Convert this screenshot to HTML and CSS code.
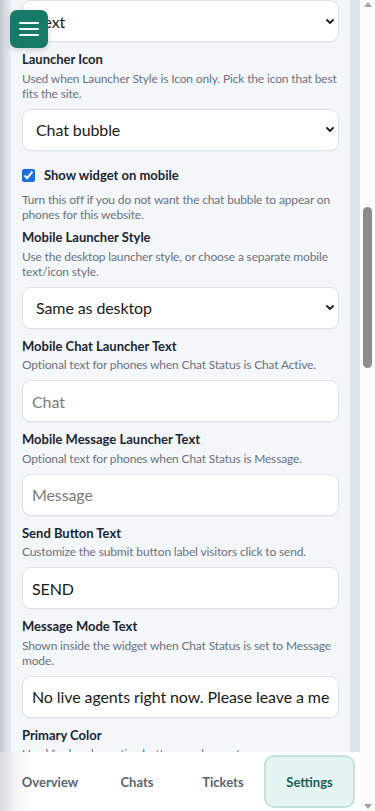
FILE: index.html
```html
<!DOCTYPE html>
<html lang="en">
<head>
<meta charset="utf-8">
<meta name="viewport" content="width=device-width, initial-scale=1">
<title>Widget Settings</title>
<link rel="stylesheet" href="styles.css">
</head>
<body>
<div class="screen">
  <div class="app">
    <div class="content-row">
      <div class="edge-shadow"></div>
      <main class="panel">
        <div class="fields">
          <div class="field field--bare">
            <div class="select-wrap">
              <select class="control select"><option>Text</option></select>
              <svg class="chev" width="8" height="5" viewBox="0 0 8 5"><path d="M1 1 L4 4 L7 1" fill="none" stroke="#1f1f1f" stroke-width="1.8" stroke-linecap="round" stroke-linejoin="round"/></svg>
            </div>
          </div>

          <div class="field">
            <label class="label">Launcher Icon</label>
            <p class="help">Used when Launcher Style is Icon only. Pick the icon that best fits the site.</p>
            <div class="select-wrap">
              <select class="control select"><option>Chat bubble</option></select>
              <svg class="chev" width="8" height="5" viewBox="0 0 8 5"><path d="M1 1 L4 4 L7 1" fill="none" stroke="#1f1f1f" stroke-width="1.8" stroke-linecap="round" stroke-linejoin="round"/></svg>
            </div>
          </div>

          <div class="field field--check">
            <label class="check-row"><input type="checkbox" class="check" checked><span class="label label--inline">Show widget on mobile</span></label>
            <p class="help help--check">Turn this off if you do not want the chat bubble to appear on phones for this website.</p>
          </div>

          <div class="field">
            <label class="label">Mobile Launcher Style</label>
            <p class="help">Use the desktop launcher style, or choose a separate mobile text/icon style.</p>
            <div class="select-wrap">
              <select class="control select"><option>Same as desktop</option></select>
              <svg class="chev" width="8" height="5" viewBox="0 0 8 5"><path d="M1 1 L4 4 L7 1" fill="none" stroke="#1f1f1f" stroke-width="1.8" stroke-linecap="round" stroke-linejoin="round"/></svg>
            </div>
          </div>

          <div class="field">
            <label class="label">Mobile Chat Launcher Text</label>
            <p class="help">Optional text for phones when Chat Status is Chat Active.</p>
            <input class="control input" type="text" placeholder="Chat">
          </div>

          <div class="field">
            <label class="label">Mobile Message Launcher Text</label>
            <p class="help">Optional text for phones when Chat Status is Message.</p>
            <input class="control input" type="text" placeholder="Message">
          </div>

          <div class="field">
            <label class="label">Send Button Text</label>
            <p class="help">Customize the submit button label visitors click to send.</p>
            <input class="control input" type="text" value="SEND">
          </div>

          <div class="field">
            <label class="label">Message Mode Text</label>
            <p class="help">Shown inside the widget when Chat Status is set to Message mode.</p>
            <input class="control input" type="text" value="No live agents right now. Please leave a message and we will reply soon.">
          </div>

          <div class="field">
            <label class="label">Primary Color</label>
            <p class="help">Used for header, active buttons and accents.</p>
          </div>
        </div>
      </main>
      <div class="rail"></div>
    </div>
    <nav class="tabs">
      <a class="tab">Overview</a>
      <a class="tab">Chats</a>
      <a class="tab tab--third">Tickets</a>
      <a class="tab tab--active">Settings</a>
    </nav>
  </div>
  <div class="scrollbar">
    <div class="sb-btn"><span class="tri tri--up"></span></div>
    <div class="sb-track"><div class="sb-thumb"></div></div>
    <div class="sb-btn"><span class="tri tri--down"></span></div>
  </div>
</div>
<button class="menu-btn" aria-label="Menu">
  <span class="bar"></span><span class="bar"></span><span class="bar"></span>
</button>
</body>
</html>
```

FILE: styles.css
```css
* { box-sizing: border-box; }

html, body {
  margin: 0;
  padding: 0;
  height: 811px;
  overflow: hidden;
}

body {
  font-family: Lato, "Noto Sans", sans-serif;
  color: #1e293b;
  background: #ffffff;
}

.screen {
  display: flex;
  height: 811px;
  width: 375px;
}

.app {
  width: 360px;
  display: flex;
  flex-direction: column;
  height: 811px;
}

.content-row {
  display: flex;
  height: 752px;
  overflow: hidden;
  background: #dde3ec;
}

.edge-shadow {
  width: 11px;
  flex: none;
  background: linear-gradient(to right, #c2c7cf 0%, #d9dde3 50%, #e9ecf0 100%);
}

.panel {
  width: 339px;
  flex: none;
  background: #f4f7fa;
  padding: 0 11px;
}

.rail {
  width: 10px;
  flex: none;
  background: #dde3ec;
}

.fields {
  display: flex;
  flex-direction: column;
  gap: 8px;
}

.field {
  display: flex;
  flex-direction: column;
}

.field--check {
  margin-top: 7.5px;
  margin-bottom: -1.5px;
}

.label {
  display: block;
  font-size: 13px;
  font-weight: 700;
  line-height: 18px;
  color: #1c2533;
  margin-bottom: 2.5px;
}

.label--inline {
  margin-bottom: 0;
}

.help {
  margin: 0;
  font-size: 12px;
  line-height: 15px;
  letter-spacing: -0.15px;
  color: #6b7280;
}

.help--check {
  margin-top: 7.5px;
}

.check-row {
  display: flex;
  align-items: center;
  gap: 9px;
  height: 18px;
}

.check {
  margin: 0;
  width: 13px;
  height: 13px;
  accent-color: #1d6fe0;
}

.control {
  margin-top: 8px;
  height: 42px;
  width: 100%;
  border: 1px solid #dde2e8;
  border-radius: 9px;
  background: #ffffff;
  font-family: inherit;
  font-size: 16px;
  letter-spacing: -0.1px;
  color: #1a1a1a;
  box-shadow: 0 1px 1px rgba(15, 23, 42, 0.03);
}

.field--bare .select-wrap .control { margin-top: 0; }

.select-wrap {
  display: grid;
  align-items: center;
}

.select-wrap > * {
  grid-area: 1 / 1;
}

.select {
  appearance: none;
  -webkit-appearance: none;
  padding: 0 28px 0 13px;
  outline: none;
}

.chev {
  justify-self: end;
  margin-right: 5px;
  margin-top: 8px;
  pointer-events: none;
}

.field--bare .chev { margin-top: 0; }

.input {
  padding: 0 9px;
  outline: none;
}

.input::placeholder {
  color: #7a7a7a;
}

.tabs {
  height: 59px;
  flex: none;
  display: grid;
  grid-template-columns: 100px 74px 90px 91px;
  padding: 3px 0 3px 0;
  background: linear-gradient(to right, #d8dbe0 0px, #f1f2f4 14px, #ffffff 32px);
}

.tab {
  display: flex;
  align-items: center;
  justify-content: center;
  font-size: 13px;
  font-weight: 700;
  color: #5b6472;
  border: 2px solid transparent;
  border-radius: 10px;
  text-decoration: none;
}

.tab--third {
  padding-left: 8px;
}

.tab--active {
  background: #e4f4f0;
  border-color: #c4e2d9;
  color: #1f5e56;
}

.scrollbar {
  width: 15px;
  flex: none;
  display: flex;
  flex-direction: column;
  background: #fbfbfb;
}

.sb-btn {
  height: 15px;
  display: flex;
  align-items: center;
  justify-content: center;
  flex: none;
}

.tri {
  width: 0;
  height: 0;
  border-left: 4px solid transparent;
  border-right: 4px solid transparent;
}

.tri--up {
  border-bottom: 5px solid #a3a3a3;
  margin-top: -6px;
}

.tri--down {
  border-top: 5px solid #a3a3a3;
  margin-top: 6px;
}

.sb-track {
  flex: 1;
  padding: 192px 3px 0 3px;
}

.sb-thumb {
  height: 161px;
  width: 9px;
  border-radius: 5px;
  background: #8c8c8c;
}

.menu-btn {
  position: fixed;
  top: 10px;
  left: 10px;
  width: 38px;
  height: 38px;
  border: none;
  border-radius: 7px;
  background: #177a68;
  display: flex;
  flex-direction: column;
  align-items: center;
  justify-content: center;
  gap: 4px;
  padding: 0;
  box-shadow: 0 2px 6px rgba(15, 23, 42, 0.18);
}

.bar {
  display: block;
  width: 20px;
  height: 2px;
  background: #ffffff;
  border-radius: 1px;
}
```
